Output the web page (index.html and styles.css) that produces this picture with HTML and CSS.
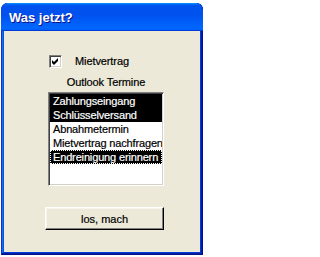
FILE: index.html
```html
<!DOCTYPE html>
<html lang="de">
<head>
<meta charset="utf-8">
<title>Was jetzt?</title>
<link rel="stylesheet" href="styles.css">
</head>
<body>
<div class="window">
  <div class="titlebar"><span class="title">Was jetzt?</span></div>
  <div class="client">
    <label class="check">
      <span class="box"><svg width="9" height="9" viewBox="0 0 9 9"><polygon points="1,3 3,5 7,1 7,4 3,8 1,6" fill="#000"/></svg></span>
      <span class="check-label">Mietvertrag</span>
    </label>
    <div class="caption">Outlook Termine</div>
    <ul class="list">
      <li class="item sel">Zahlungseingang</li>
      <li class="item sel">Schlüsselversand</li>
      <li class="item">Abnahmetermin</li>
      <li class="item">Mietvertrag nachfragen</li>
      <li class="item sel focus">Endreinigung erinnern</li>
    </ul>
    <button class="btn" type="button">los, mach</button>
  </div>
</div>
</body>
</html>
```

FILE: styles.css
```css
html, body {
  margin: 0;
  padding: 0;
  background: #ffffff;
}

body {
  width: 205px;
  height: 257px;
  overflow: hidden;
  font-family: "Liberation Sans", Arial, sans-serif;
  font-size: 11px;
  color: #000;
  -webkit-text-stroke: 0.2px currentColor;
}

.window {
  margin: 3px 0 0 1px;
  width: 202px;
  height: 252px;
  box-sizing: border-box;
  border-radius: 7px 7px 0 0;
  background: #0831d9;
  box-shadow: inset -1px -1px #00138c, inset 1px 1px #0831d9,
              inset -2px -2px #001ea0, inset 2px 2px #166aee,
              inset -3px -3px #003bda, inset 3px 3px #0855dd;
  display: flex;
  flex-direction: column;
  overflow: hidden;
}

.titlebar {
  height: 28px;
  flex: none;
  border-radius: 7px 7px 0 0;
  background: linear-gradient(180deg, #0997ff, #0053ee 8%, #0050ee 40%, #0066ff 88%, #0066ff 93%, #005bff 95%, #003dd7 96%, #003dd7);
  padding-left: 8px;
  box-sizing: border-box;
}

.title {
  display: block;
  font-family: "Liberation Sans", Arial, sans-serif;
  font-weight: bold;
  font-size: 13px;
  line-height: 28px;
  padding-top: 1px;
  color: #fff;
  -webkit-text-stroke: 0;
  text-shadow: 1px 1px #0f1089;
}

.client {
  flex: 1;
  margin: 0 3px 3px 3px;
  background: #ece9d8;
  padding-top: 24px;
  display: flex;
  flex-direction: column;
  align-items: flex-start;
}

.check {
  margin-left: 45px;
  display: flex;
  align-items: center;
  height: 13px;
  line-height: 13px;
}

.box {
  width: 13px;
  height: 13px;
  box-sizing: border-box;
  background: #fff;
  border-style: solid;
  border-width: 1px;
  border-color: #808080 #ffffff #ffffff #808080;
  box-shadow: inset 1px 1px 0 #404040, inset -1px -1px 0 #d4d0c8;
  display: flex;
  align-items: center;
  justify-content: center;
}

.box svg {
  display: block;
}

.check-label {
  margin-left: 13px;
  letter-spacing: -0.1px;
}

.caption {
  margin-top: 8px;
  margin-left: 44px;
  width: 116px;
  text-align: center;
  line-height: 13px;
  letter-spacing: -0.1px;
}

.list {
  list-style: none;
  margin: 3px 0 0 44px;
  width: 116px;
  height: 94px;
  box-sizing: border-box;
  background: #fff;
  border-style: solid;
  border-width: 1px;
  border-color: #808080 #ffffff #ffffff #808080;
  box-shadow: inset 1px 1px 0 #404040, inset -1px -1px 0 #d4d0c8;
  padding: 1px;
  overflow: hidden;
}

.item {
  height: 14px;
  line-height: 14px;
  padding-left: 3px;
  white-space: nowrap;
  overflow: hidden;
  box-sizing: border-box;
  letter-spacing: -0.15px;
}

.item.sel {
  background: #000;
  color: #fff;
}

.item.focus {
  border: 1px dotted #fff;
  padding-left: 2px;
  line-height: 12px;
}

.btn {
  margin: 21px 0 0 41px;
  width: 119px;
  height: 23px;
  padding: 0;
  box-sizing: border-box;
  background: #ece9d8;
  font-family: "Liberation Sans", Arial, sans-serif;
  font-size: 11px;
  color: #000;
  -webkit-text-stroke: 0.2px currentColor;
  border-style: solid;
  border-width: 1px;
  border-color: #ffffff #000000 #000000 #ffffff;
  box-shadow: inset -1px -1px 0 #808080, inset 1px 1px 0 #f6f4ec;
}
```
